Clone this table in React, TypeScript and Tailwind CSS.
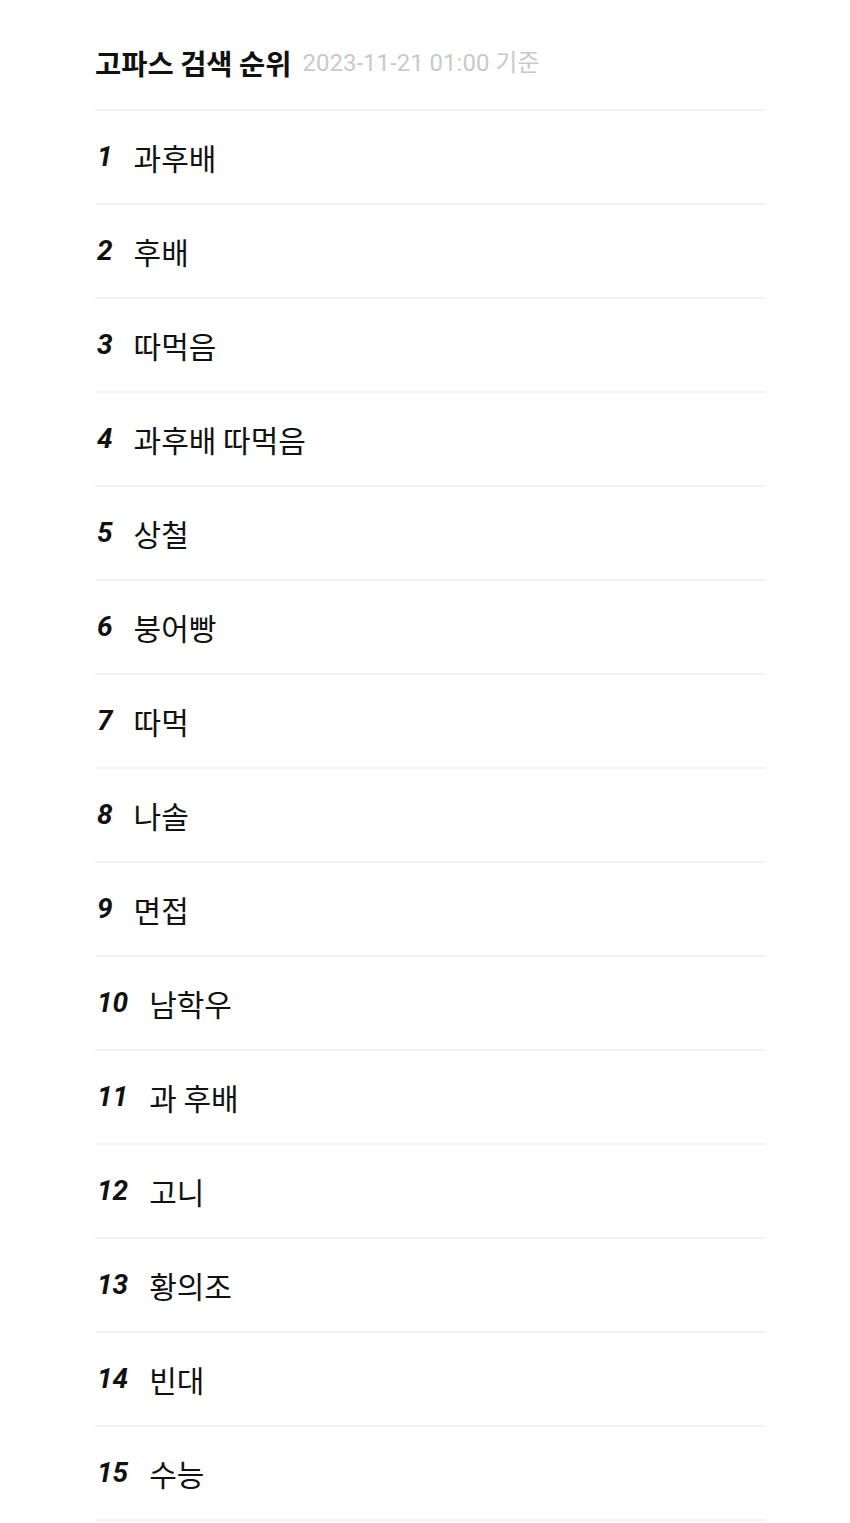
import React from 'react';

const KEYWORDS = [
  '과후배',
  '후배',
  '따먹음',
  '과후배 따먹음',
  '상철',
  '붕어빵',
  '따먹',
  '나솔',
  '면접',
  '남학우',
  '과 후배',
  '고니',
  '황의조',
  '빈대',
  '수능',
];

const KR = { fontFamily: '"Noto Sans CJK KR", "Noto Sans", sans-serif' };
const NUM = { fontFamily: 'Roboto, "Liberation Sans", sans-serif' };

export default function App() {
  return (
    <div className="min-h-[1523px] w-[850px] bg-white">
      <div className="ml-[95px] w-[671px]">
        {/* Header */}
        <div className="flex h-[109px] items-center pt-[17px]">
          <span className="text-[28.5px] font-bold leading-none text-[#111]" style={KR}>
            고파스 검색 순위
          </span>
          <span className="ml-[11px] text-[24px] leading-none text-[#c9c9c9]" style={{ fontFamily: 'Roboto, "Noto Sans CJK KR", sans-serif' }}>
            2023-11-21 01:00 기준
          </span>
        </div>
        <div className="h-[2px] bg-[#f2f2f2]" />

        {/* Ranking list */}
        {KEYWORDS.map((word, i) => (
          <div key={word}>
            <div className="flex h-[92px] items-center pl-[2px]">
              <span className="text-[28px] font-bold italic leading-none text-[#111]" style={NUM}>
                {i + 1}
              </span>
              <span className="ml-[21px] text-[30px] leading-none text-[#111]" style={KR}>
                {word}
              </span>
            </div>
            <div className="h-[2px] bg-[#f2f2f2]" />
          </div>
        ))}
      </div>
    </div>
  );
}
